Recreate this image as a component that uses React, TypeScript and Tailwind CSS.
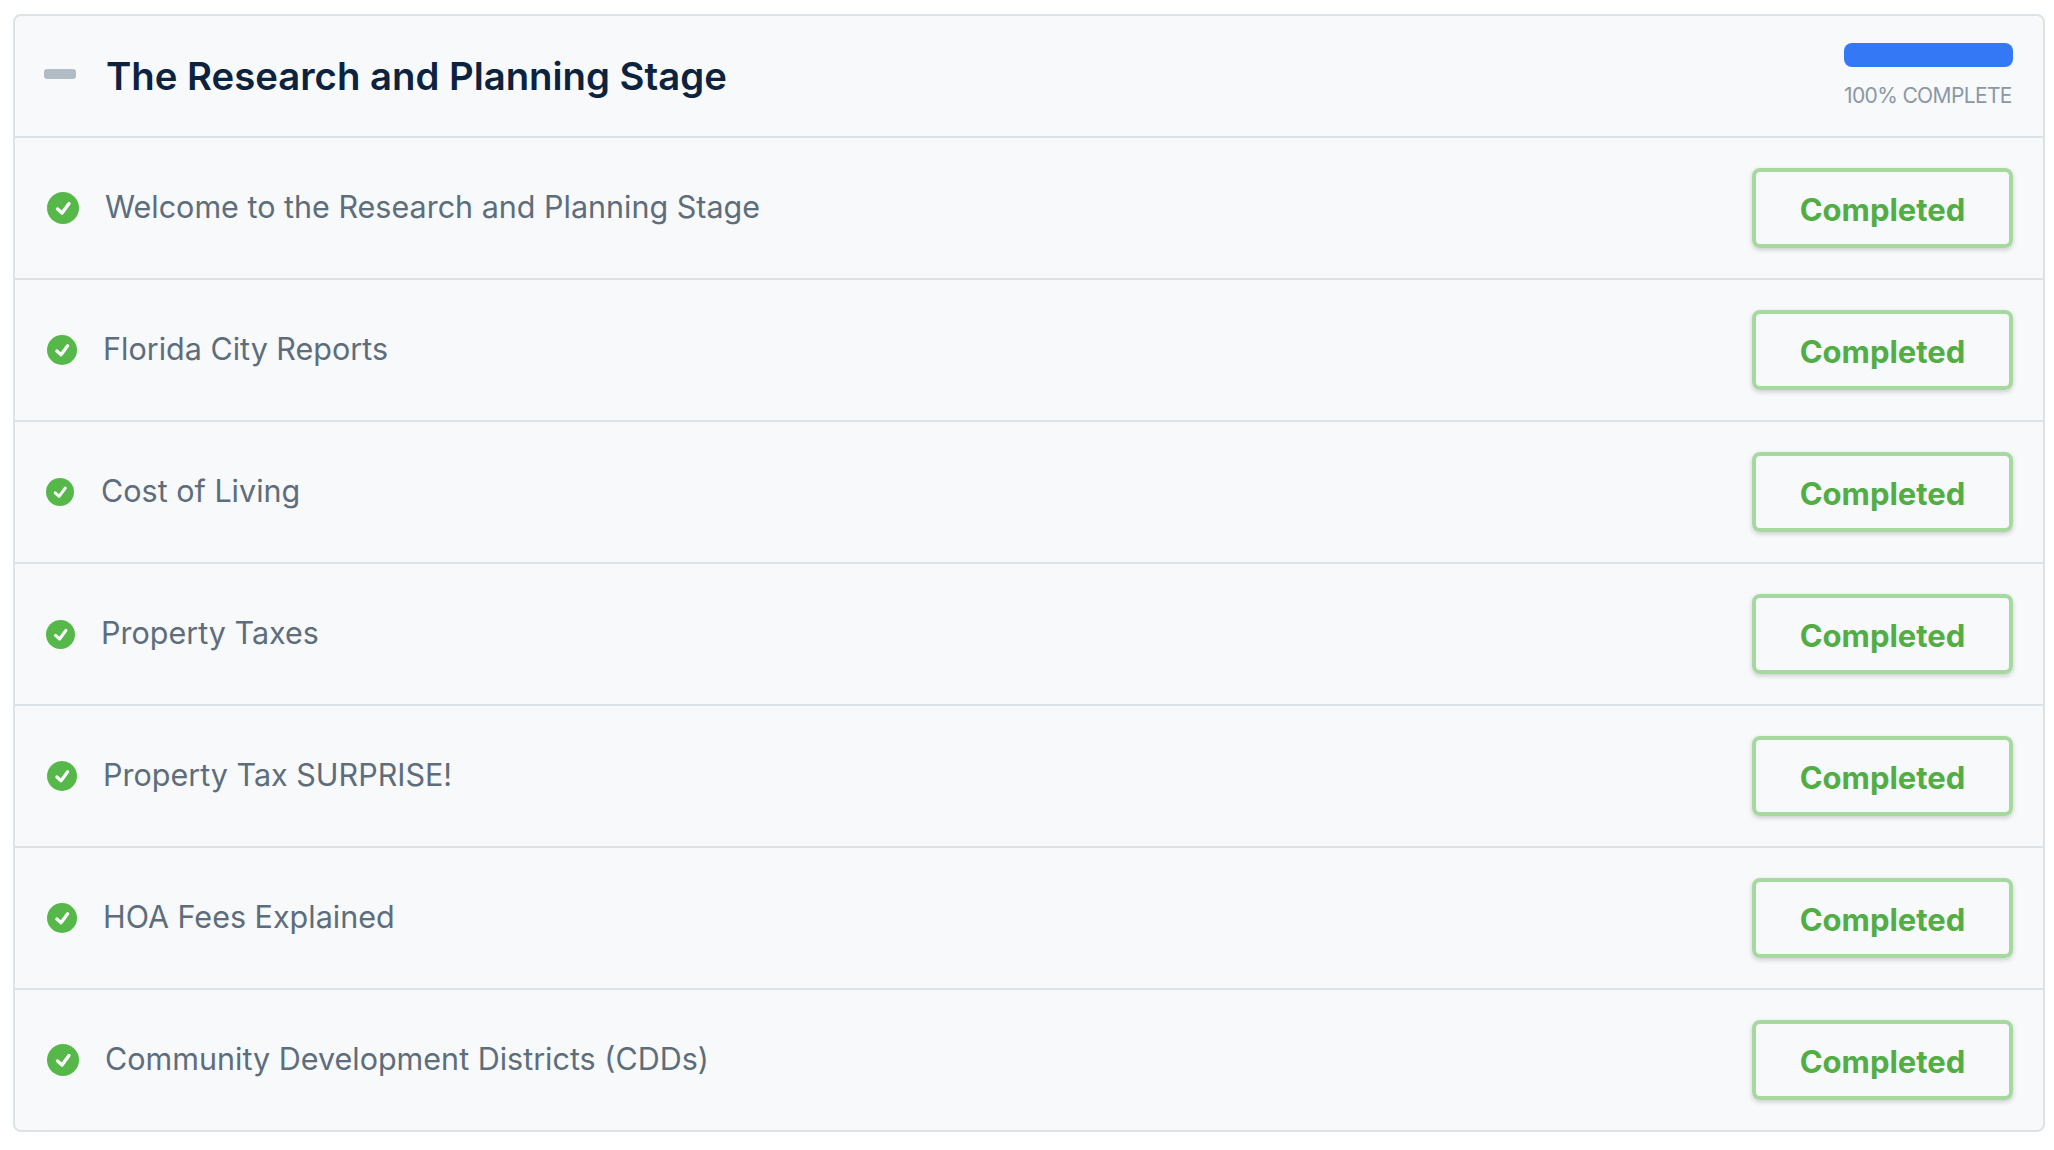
const ROWS = [
  { title: 'Welcome to the Research and Planning Stage', iconSize: 'size-8', pad: 'pl-[32px]', gap: 'gap-[26px]' },
  { title: 'Florida City Reports', iconSize: 'size-[30px]', pad: 'pl-[32px]', gap: 'gap-[26px]' },
  { title: 'Cost of Living', iconSize: 'size-[28px]', pad: 'pl-[31px]', gap: 'gap-[27px]' },
  { title: 'Property Taxes', iconSize: 'size-[29px]', pad: 'pl-[31px]', gap: 'gap-[26px]' },
  { title: 'Property Tax SURPRISE!', iconSize: 'size-[30px]', pad: 'pl-[32px]', gap: 'gap-[26px]' },
  { title: 'HOA Fees Explained', iconSize: 'size-[30px]', pad: 'pl-[32px]', gap: 'gap-[26px]' },
  { title: 'Community Development Districts (CDDs)', iconSize: 'size-8', pad: 'pl-[32px]', gap: 'gap-[26px]' },
];

function CheckIcon({ className }: { className: string }) {
  return (
    <svg viewBox="0 0 32 32" className={`shrink-0 ${className}`}>
      <circle cx="16" cy="16" r="16" fill="#55b849" />
      <path d="M10.5 17l4.5 4 7-9.5" fill="none" stroke="#fff" strokeWidth="3.4" strokeLinecap="round" strokeLinejoin="round" />
    </svg>
  );
}

export default function App() {
  return (
    <div className="min-h-[1150px] bg-white pt-[14px] pl-[13px] pr-[9px] font-['Inter',sans-serif]">
      <div className="overflow-hidden rounded-lg border-2 border-[#dbe2e8] bg-[#f7f9fb]">
        <div className="flex h-[120px] items-center justify-between pl-[29px] pr-[30px]">
          <div className="flex items-center gap-[30px]">
            <div className="mb-[4px] h-[10px] w-8 rounded-[3px] bg-[#b2bcc4]" />
            <h2 className="text-[38.3px] leading-none font-semibold text-[#0c2340]">The Research and Planning Stage</h2>
          </div>
          <div className="mb-[4px] flex w-[169px] flex-col gap-[18px]">
            <div className="h-6 rounded-lg bg-[#3578f6]" />
            <span className="text-[21px] leading-none tracking-[-0.03em] whitespace-nowrap text-[#8a98a5]">100% COMPLETE</span>
          </div>
        </div>
        {ROWS.map((row) => (
          <div key={row.title} className={`flex h-[142px] items-center justify-between border-t-2 border-[#dbe2e8] pr-[30px] ${row.pad}`}>
            <div className={`flex items-center ${row.gap}`}>
              <CheckIcon className={row.iconSize} />
              <span className="mb-[2px] text-[30.5px] leading-none text-[#5d6d7c]">{row.title}</span>
            </div>
            <button type="button" className="h-[80px] w-[261px] rounded-lg border-4 border-[#a6d99f] pt-[4px] text-[31px] font-bold text-[#52ad45] shadow-[0_2px_5px_rgba(0,0,0,0.18)]">
              Completed
            </button>
          </div>
        ))}
      </div>
    </div>
  );
}
